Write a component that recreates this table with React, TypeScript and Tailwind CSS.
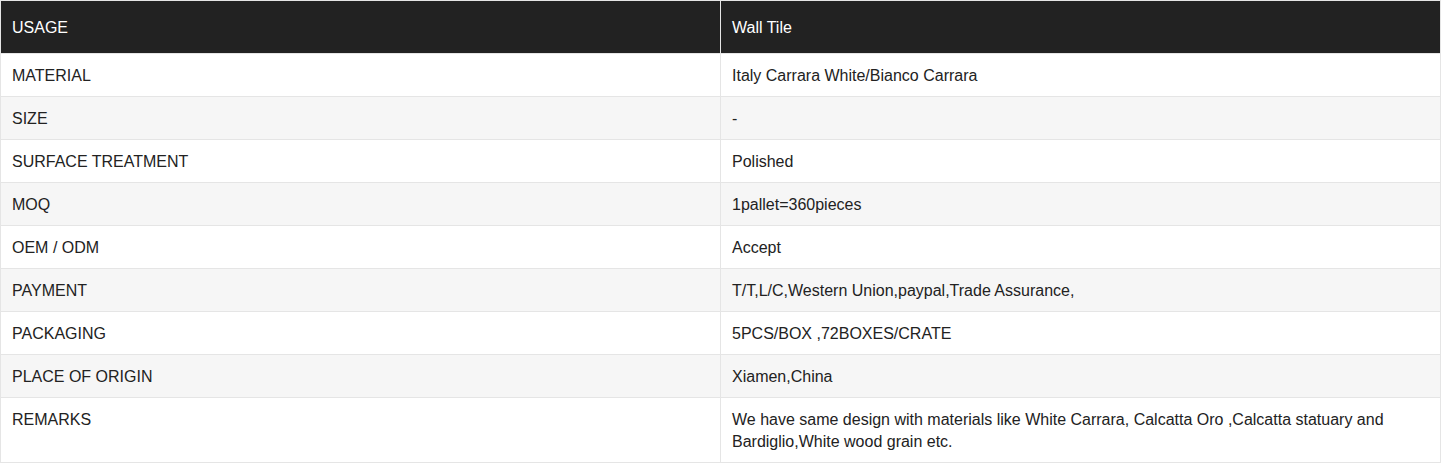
const rows: [string, string][] = [
  ["MATERIAL", "Italy Carrara White/Bianco Carrara"],
  ["SIZE", "-"],
  ["SURFACE TREATMENT", "Polished"],
  ["MOQ", "1pallet=360pieces"],
  ["OEM / ODM", "Accept"],
  ["PAYMENT", "T/T,L/C,Western Union,paypal,Trade Assurance,"],
  ["PACKAGING", "5PCS/BOX ,72BOXES/CRATE"],
  ["PLACE OF ORIGIN", "Xiamen,China"],
  [
    "REMARKS",
    "We have same design with materials like White Carrara, Calcatta Oro ,Calcatta statuary and Bardiglio,White wood grain etc.",
  ],
];

export default function App() {
  return (
    <div className="min-h-screen bg-white font-['Liberation_Sans',Arial,sans-serif] text-[16px] leading-[22px] text-[#222]">
      <table className="w-[1441px] table-fixed border-collapse border border-[#e5e5e5]">
        <colgroup>
          <col className="w-[720px]" />
          <col />
        </colgroup>
        <thead>
          <tr className="bg-[#222] text-white">
            <th className="border border-[#e5e5e5] pt-[16px] pb-[14px] pl-[11px] pr-[10px] text-left font-normal">USAGE</th>
            <th className="border border-[#e5e5e5] pt-[16px] pb-[14px] pl-[11px] pr-[10px] text-left font-normal">Wall Tile</th>
          </tr>
        </thead>
        <tbody>
          {rows.map(([label, value], i) => (
            <tr key={label} className={i % 2 === 1 ? "bg-[#f6f6f6]" : "bg-white"}>
              <td className="border border-[#e5e5e5] pt-[11px] pb-[9px] pl-[11px] pr-[10px] align-top">{label}</td>
              <td className="border border-[#e5e5e5] pt-[11px] pb-[9px] pl-[11px] pr-[10px] align-top">{value}</td>
            </tr>
          ))}
        </tbody>
      </table>
    </div>
  );
}
